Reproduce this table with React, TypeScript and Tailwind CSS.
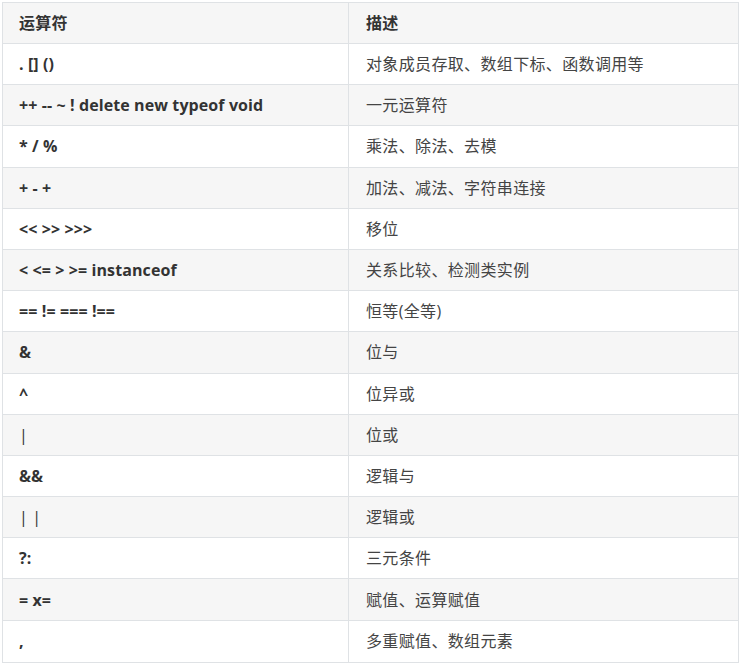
import React from "react";

const rows: [string, string][] = [
  [". [] ()", "对象成员存取、数组下标、函数调用等"],
  ["++ -- ~ ! delete new typeof void", "一元运算符"],
  ["* / %", "乘法、除法、去模"],
  ["+ - +", "加法、减法、字符串连接"],
  ["<< >> >>>", "移位"],
  ["< <= > >= instanceof", "关系比较、检测类实例"],
  ["== != === !==", "恒等(全等)"],
  ["&", "位与"],
  ["^", "位异或"],
  ["|", "位或"],
  ["&&", "逻辑与"],
  ["| |", "逻辑或"],
  ["?:", "三元条件"],
  ["= x=", "赋值、运算赋值"],
  [",", "多重赋值、数组元素"],
];

const font = { fontFamily: '"Open Sans", "Noto Sans CJK SC", sans-serif' };

export default function App() {
  return (
    <div className="w-[741px] h-[664px] bg-white p-[2px]" style={font}>
      <div className="w-[737px] border border-[#dfe2e5]">
        <div className="grid grid-cols-[346px_389px] h-[41px] bg-[#f6f6f6] border-b border-[#dfe2e5]">
          <div className="flex items-center pl-[16px] text-[16px] font-bold text-[#333] tracking-[0.3px] border-r border-[#dfe2e5]">
            运算符
          </div>
          <div className="flex items-center pl-[17px] text-[16px] font-bold text-[#333] tracking-[0.3px]">描述</div>
        </div>
        {rows.map(([op, desc], i) => {
          const isPipe = op === "|" || op === "| |";
          return (
            <div
              key={i}
              className={`grid grid-cols-[346px_389px] h-[41.2px] ${
                i % 2 === 1 ? "bg-[#f6f6f6]" : "bg-white"
              } ${i < rows.length - 1 ? "border-b border-[#dfe2e5]" : ""}`}
            >
              <div
                className={`flex items-center pl-[16px] text-[16px] text-[#333] tracking-[0.1px] border-r border-[#dfe2e5] whitespace-pre ${
                  isPipe ? "font-normal" : "font-bold"
                }`}
              >
                {op}
              </div>
              <div className="flex items-center pl-[17px] text-[16px] text-[#444] tracking-[0.35px]">{desc}</div>
            </div>
          );
        })}
      </div>
    </div>
  );
}
